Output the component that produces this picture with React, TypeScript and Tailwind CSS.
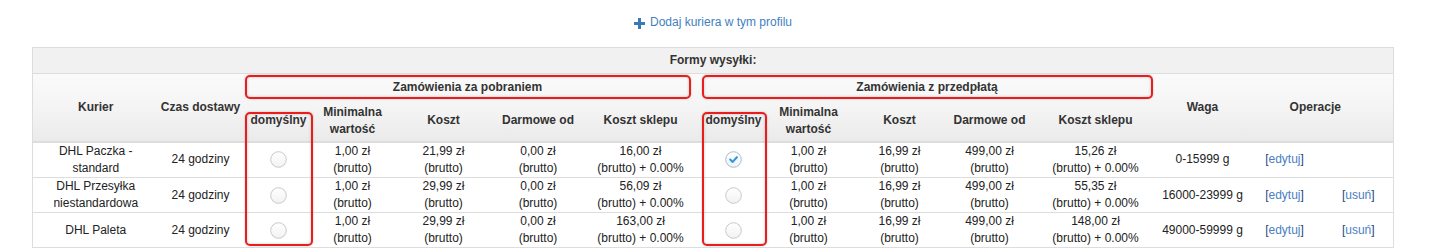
import React from "react";

type Row = {
  name: string[];
  time: string;
  cod: { def: boolean; min: string; cost: string; free: string; shop: string };
  pre: { def: boolean; min: string; cost: string; free: string; shop: string };
  weight: string;
  canDelete: boolean;
};

const rows: Row[] = [
  {
    name: ["DHL Paczka -", "standard"],
    time: "24 godziny",
    cod: { def: false, min: "1,00 zł", cost: "21,99 zł", free: "0,00 zł", shop: "16,00 zł" },
    pre: { def: true, min: "1,00 zł", cost: "16,99 zł", free: "499,00 zł", shop: "15,26 zł" },
    weight: "0-15999 g",
    canDelete: false,
  },
  {
    name: ["DHL Przesyłka", "niestandardowa"],
    time: "24 godziny",
    cod: { def: false, min: "1,00 zł", cost: "29,99 zł", free: "0,00 zł", shop: "56,09 zł" },
    pre: { def: false, min: "1,00 zł", cost: "16,99 zł", free: "499,00 zł", shop: "55,35 zł" },
    weight: "16000-23999 g",
    canDelete: true,
  },
  {
    name: ["DHL Paleta"],
    time: "24 godziny",
    cod: { def: false, min: "1,00 zł", cost: "29,99 zł", free: "0,00 zł", shop: "163,00 zł" },
    pre: { def: false, min: "1,00 zł", cost: "16,99 zł", free: "499,00 zł", shop: "148,00 zł" },
    weight: "49000-59999 g",
    canDelete: true,
  },
];

const colWidths = [126, 84, 72, 76, 106, 83, 122, 64, 86, 96, 84, 128, 86, 78, 70];

const Radio = ({ checked }: { checked: boolean }) => (
  <svg width="17" height="17" viewBox="0 0 17 17" className="mx-auto block">
    <defs>
      <linearGradient id={checked ? "rg-on" : "rg-off"} x1="0" y1="0" x2="0" y2="1">
        <stop offset="0" stopColor="#ffffff" />
        <stop offset="1" stopColor={checked ? "#eef3f7" : "#f2f2f2"} />
      </linearGradient>
    </defs>
    <circle
      cx="8.5"
      cy="8.5"
      r="7.8"
      fill={`url(#${checked ? "rg-on" : "rg-off"})`}
      stroke={checked ? "#a9bccb" : "#c8c8c8"}
      strokeWidth="1"
    />
    {checked && (
      <path
        d="M5.2 8.6 L7.6 10.9 L11.9 6.2"
        fill="none"
        stroke="#2f9ad8"
        strokeWidth="2.1"
        strokeLinecap="round"
        strokeLinejoin="round"
      />
    )}
  </svg>
);

const Price = ({ value, shop }: { value: string; shop?: boolean }) => (
  <>
    {value}
    <br />
    {shop ? "(brutto) + 0.00%" : "(brutto)"}
  </>
);

const Action = ({ label }: { label: string }) => (
  <a href="#" className="text-[#4a80c2]">
    <span className="text-[#27477e]">[</span>
    {label}
    <span className="text-[#27477e]">]</span>
  </a>
);

const Marker = ({ className }: { className: string }) => (
  <div
    className={`pointer-events-none absolute rounded-[5px] border-2 border-[#ea1c1c] shadow-[inset_0_0_3px_rgba(0,0,0,0.22),0_0_2px_rgba(0,0,0,0.25)] ${className}`}
  />
);

export default function App() {
  return (
    <div className="h-[249px] w-[1437px] overflow-hidden bg-white font-['Liberation_Sans',Arial,sans-serif] text-[12px] leading-[17px] text-[#222]">
      <div className="ml-[32px] w-[1362px]">
        {/* Add courier link */}
        <div className="mt-[14px] mb-[16px] flex h-[17px] items-center justify-center">
          <a href="#" className="flex items-center gap-[5px] text-[#3f7fc0]">
            <svg width="11" height="11" viewBox="0 0 11 11" className="mt-[1px]">
              <rect x="4" y="0" width="3" height="11" fill="#3b78b8" />
              <rect x="0" y="4" width="11" height="3" fill="#3b78b8" />
            </svg>
            <span>Dodaj kuriera w tym profilu</span>
          </a>
        </div>

        {/* Table */}
        <div className="relative">
          <table className="w-[1362px] table-fixed border-collapse border border-[#dddddd] text-center">
            <colgroup>
              {colWidths.map((w, i) => (
                <col key={i} style={{ width: w }} />
              ))}
            </colgroup>
            <thead className="bg-[linear-gradient(to_bottom,#f3f3f3_0%,#fafafa_30%,#f4f4f4_65%,#eaeaea_100%)] font-bold text-[#333]">
              <tr className="h-[26px]">
                <th colSpan={15} className="border-b border-[#dddddd] bg-[#f1f1f1] p-0 align-middle">
                  Formy wysyłki:
                </th>
              </tr>
              <tr className="h-[27px]">
                <th rowSpan={2} className="p-0 align-middle">Kurier</th>
                <th rowSpan={2} className="p-0 align-middle">Czas dostawy</th>
                <th colSpan={5} className="p-0 align-middle">
                  <div className="ml-[2px] mr-[11px] flex h-[24px] items-center justify-center rounded-[5px] border-2 border-[#ea1c1c] shadow-[inset_0_0_3px_rgba(0,0,0,0.22),0_0_2px_rgba(0,0,0,0.25)]">
                    Zamówienia za pobraniem
                  </div>
                </th>
                <th colSpan={5} className="p-0 align-middle">
                  <div className="ml-0 mr-[7px] flex h-[24px] items-center justify-center rounded-[5px] border-2 border-[#ea1c1c] shadow-[inset_0_0_3px_rgba(0,0,0,0.22),0_0_2px_rgba(0,0,0,0.25)]">
                    Zamówienia z przedpłatą
                  </div>
                </th>
                <th rowSpan={2} className="p-0 align-middle">Waga</th>
                <th rowSpan={2} colSpan={2} className="p-0 pr-[8px] align-middle">Operacje</th>
              </tr>
              <tr className="h-[41px] border-b-2 border-[#dddddd]">
                {[0, 1].map((g) => (
                  <React.Fragment key={g}>
                    <th className="p-0 align-middle">domyślny</th>
                    <th className="p-0 align-middle">
                      Minimalna
                      <br />
                      wartość
                    </th>
                    <th className="p-0 align-middle">Koszt</th>
                    <th className="p-0 align-middle">Darmowe od</th>
                    <th className="p-0 align-middle">Koszt sklepu</th>
                  </React.Fragment>
                ))}
              </tr>
            </thead>
            <tbody>
              {rows.map((r, i) => (
                <tr key={i} className={`${i === 0 ? "h-[36px]" : "h-[35px]"} border-b border-[#dddddd]`}>
                  <td className="p-0 align-middle">
                    {r.name.map((n, k) => (
                      <React.Fragment key={k}>
                        {k > 0 && <br />}
                        {n}
                      </React.Fragment>
                    ))}
                  </td>
                  <td className="p-0 align-middle">{r.time}</td>
                  <td className="p-0 align-middle"><Radio checked={r.cod.def} /></td>
                  <td className="p-0 align-middle"><Price value={r.cod.min} /></td>
                  <td className="p-0 align-middle"><Price value={r.cod.cost} /></td>
                  <td className="p-0 align-middle"><Price value={r.cod.free} /></td>
                  <td className="p-0 align-middle"><Price value={r.cod.shop} shop /></td>
                  <td className="p-0 align-middle"><Radio checked={r.pre.def} /></td>
                  <td className="p-0 align-middle"><Price value={r.pre.min} /></td>
                  <td className="p-0 align-middle"><Price value={r.pre.cost} /></td>
                  <td className="p-0 align-middle"><Price value={r.pre.free} /></td>
                  <td className="p-0 align-middle"><Price value={r.pre.shop} shop /></td>
                  <td className="p-0 align-middle">{r.weight}</td>
                  <td className="p-0 align-middle"><Action label="edytuj" /></td>
                  <td className="p-0 align-middle">{r.canDelete && <Action label="usuń" />}</td>
                </tr>
              ))}
            </tbody>
          </table>

          {/* Highlight around the "domyślny" columns */}
          <Marker className="left-[213px] top-[65px] h-[134px] w-[68px]" />
          <Marker className="left-[670px] top-[65px] h-[134px] w-[65px]" />
        </div>
      </div>
    </div>
  );
}
